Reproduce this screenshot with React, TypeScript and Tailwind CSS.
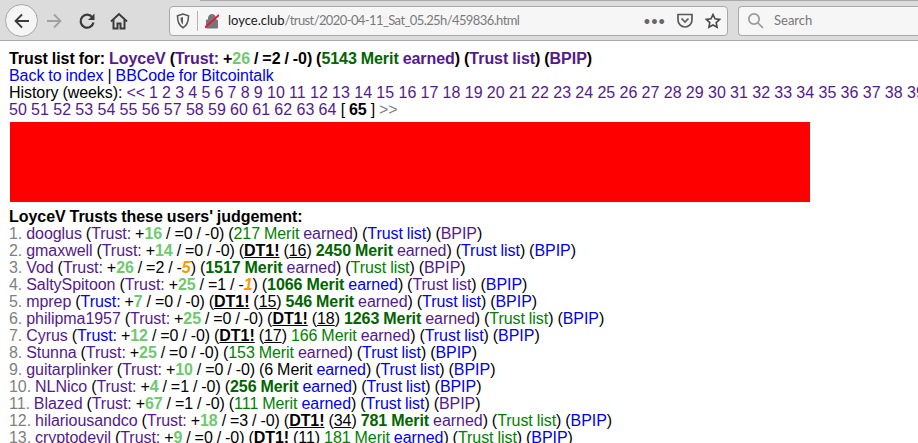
const PURPLE = "text-[#551a8b]";
const BLUE = "text-[#0000ee]";
const GREEN = "text-[#008000]";

type Row = {
  name: string;
  trustColor: string;
  plus: number;
  neutral: number;
  minus: number;
  dt1?: number;
  merit: number;
  bold: boolean;
  meritColor?: string;
  earned: string;
  list: string;
  bpip: string;
};

const rows: Row[] = [
  { name: "dooglus", trustColor: PURPLE, plus: 16, neutral: 0, minus: 0, merit: 217, bold: false, earned: PURPLE, list: BLUE, bpip: PURPLE },
  { name: "gmaxwell", trustColor: PURPLE, plus: 14, neutral: 0, minus: 0, dt1: 16, merit: 2450, bold: true, earned: PURPLE, list: BLUE, bpip: BLUE },
  { name: "Vod", trustColor: PURPLE, plus: 26, neutral: 2, minus: 5, merit: 1517, bold: true, earned: PURPLE, list: GREEN, bpip: PURPLE },
  { name: "SaltySpitoon", trustColor: PURPLE, plus: 25, neutral: 1, minus: 1, merit: 1066, bold: true, earned: BLUE, list: PURPLE, bpip: BLUE },
  { name: "mprep", trustColor: BLUE, plus: 7, neutral: 0, minus: 0, dt1: 15, merit: 546, bold: true, earned: PURPLE, list: BLUE, bpip: BLUE },
  { name: "philipma1957", trustColor: PURPLE, plus: 25, neutral: 0, minus: 0, dt1: 18, merit: 1263, bold: true, earned: PURPLE, list: GREEN, bpip: BLUE },
  { name: "Cyrus", trustColor: BLUE, plus: 12, neutral: 0, minus: 0, dt1: 17, merit: 166, bold: false, earned: PURPLE, list: BLUE, bpip: BLUE },
  { name: "Stunna", trustColor: PURPLE, plus: 25, neutral: 0, minus: 0, merit: 153, bold: false, earned: PURPLE, list: BLUE, bpip: BLUE },
  { name: "guitarplinker", trustColor: PURPLE, plus: 10, neutral: 0, minus: 0, merit: 6, bold: false, meritColor: "text-black", earned: BLUE, list: BLUE, bpip: BLUE },
  { name: "NLNico", trustColor: PURPLE, plus: 4, neutral: 1, minus: 0, merit: 256, bold: true, earned: BLUE, list: BLUE, bpip: BLUE },
  { name: "Blazed", trustColor: PURPLE, plus: 67, neutral: 1, minus: 0, merit: 111, bold: false, earned: BLUE, list: BLUE, bpip: PURPLE },
  { name: "hilariousandco", trustColor: PURPLE, plus: 18, neutral: 3, minus: 0, dt1: 34, merit: 781, bold: true, earned: PURPLE, list: GREEN, bpip: BLUE },
  { name: "cryptodevil", trustColor: PURPLE, plus: 9, neutral: 0, minus: 0, dt1: 11, merit: 181, bold: false, earned: BLUE, list: GREEN, bpip: BLUE },
];

const weeks = Array.from({ length: 49 }, (_, i) => i + 1);
const weeks2 = Array.from({ length: 15 }, (_, i) => i + 50);

function Toolbar() {
  return (
    <div className="h-[41px] shrink-0 bg-[#dcdcdc] border-b border-[#a8a8a8] flex flex-col text-[#3d3d3d] font-['Lato',sans-serif]">
      <div className="h-px ml-[200px] bg-[#a8a8a8]" />
      <div className="flex-1 flex items-center pl-[5px]">
        <div className="w-[33px] h-[33px] rounded-full bg-[#f5f5f5] border border-[#a5a5a5] flex items-center justify-center">
          <svg width="18" height="18" viewBox="0 0 18 18" fill="none" stroke="#3a3a3a" strokeWidth="1.8"><path d="M16 9H2.500M9 2.500 2.500 9 9 15.500" /></svg>
        </div>
        <svg className="ml-[7px]" width="18" height="18" viewBox="0 0 18 18" fill="none" stroke="#a0a0a0" strokeWidth="1.8"><path d="M2 9h13.500M9 2.500 15.500 9 9 15.500" /></svg>
        <svg className="ml-[15px]" width="18" height="18" viewBox="0 0 18 18" fill="none" stroke="#3a3a3a" strokeWidth="2.200"><path d="M14.500 5.500A6.500 6.500 0 1 0 15.500 10.500" /><path d="M16.500 1.500v6.500h-6.500z" fill="#3a3a3a" stroke="none" /></svg>
        <svg className="ml-[14px]" width="18" height="18" viewBox="0 0 18 18" fill="none" stroke="#3a3a3a" strokeWidth="2"><path d="M1 9.500 9 2l8 7.500" /><path d="M3.500 8v8.500h4v-5h3v5h4V8" /></svg>

        <div className="ml-[41px] w-[559px] h-[30px] shrink-0 bg-[#f6f6f6] border border-[#a9a9a9] rounded-[4px] flex items-center">
          <svg className="ml-[6px]" width="14" height="16" viewBox="0 0 14 16" fill="none" stroke="#5a5a5a" strokeWidth="1.6"><path d="M7 1 1.500 2.800c0 5 .8 9.500 5.500 12 4.700-2.500 5.500-7 5.500-12z" /><path d="M7 4 4.500 4.800C4.500 7.500 5 10 7 11.500z" fill="#5a5a5a" stroke="none" /></svg>
          <div className="ml-[7px] w-px h-[20px] bg-[#b4b4b4]" />
          <svg className="ml-[7px]" width="14" height="16" viewBox="0 0 14 16"><path d="M3.500 7V5a3.500 3.500 0 0 1 7 0v2M1.500 7h11v8h-11z" fill="#777" stroke="#777" /><path d="M0 14.500 14 2" stroke="#e6183c" strokeWidth="2" /></svg>
          <div className="ml-[9px] text-[13px] leading-none whitespace-nowrap">
            <span className="text-[#1a1a1a]">loyce.club</span><span className="text-[#7a7a7a] tracking-[-0.6px]">/trust/2020-04-11_Sat_05.25h/459836.html</span>
          </div>
          <span className="ml-auto text-[#666] text-[11px] font-bold tracking-[1px]">•••</span>
          <svg className="ml-[11px]" width="16" height="15" viewBox="0 0 16 15" fill="none" stroke="#5a5a5a" strokeWidth="1.7"><path d="M1 1.500h14v5.500a7 7 0 0 1-14 0z" /><path d="m4.500 5.500 3.500 3.500 3.500-3.500" /></svg>
          <svg className="ml-[12px] mr-[6px]" width="16" height="16" viewBox="0 0 16 16" fill="none" stroke="#4a4a4a" strokeWidth="1.6"><path d="m8 1.500 2 4.300 4.700.6-3.500 3.200.9 4.700L8 12l-4.100 2.300.9-4.700L1.300 6.400 6 5.800z" /></svg>
        </div>

        <div className="ml-[10px] flex-1 h-[30px] bg-[#f6f6f6] border border-r-0 border-[#a9a9a9] rounded-l-[4px] flex items-center">
          <svg className="ml-[8px]" width="17" height="17" viewBox="0 0 17 17" fill="none" stroke="#9a9a9a" strokeWidth="1.7"><circle cx="7" cy="7" r="5.200" /><path d="m11 11 5 5" /></svg>
          <span className="ml-[10px] text-[13px] text-[#777] -mt-px">Search</span>
        </div>
      </div>
    </div>
  );
}

function UserRow({ row, index }: { row: Row; index: number }) {
  const meritColor = row.meritColor ?? (row.bold ? "text-[#006400]" : GREEN);
  return (
    <div className="h-[17px]">
      <span className="text-[#808080]">{index}. </span>
      <span className={PURPLE}>{row.name}</span> (<span className={row.trustColor}>Trust:</span> +
      <b className="text-[#6fc96f]">{row.plus}</b> / =<span>{row.neutral}</span> / -
      {row.minus > 0 ? <b className="italic text-[#ff9900]">{row.minus}</b> : row.minus})
      {" "}
      {row.dt1 !== undefined && (
        <>
          (<b className="underline">DT1!</b> (<span className="underline">{row.dt1}</span>){" "}
        </>
      )}
      {row.dt1 === undefined && "("}
      <span className={`${meritColor} ${row.bold ? "font-bold" : ""}`}>{row.merit} Merit</span>{" "}
      <span className={row.earned}>earned</span>) (<span className={row.list}>Trust list</span>) (<span className={row.bpip}>BPIP</span>)
    </div>
  );
}

export default function App() {
  return (
    <div className="w-[918px] h-[443px] overflow-hidden bg-white flex flex-col font-['Liberation_Sans',Arial,sans-serif] text-[16px] leading-[17px] text-black">
      <Toolbar />
      <div className="pl-[9px] pt-[9px] whitespace-nowrap [word-spacing:-0.45px] tracking-[-0.05px]">
        <div className="font-bold">
          Trust list for: <span className={PURPLE}>LoyceV</span> (<span className={PURPLE}>Trust:</span> +<span className="text-[#6fc96f]">26</span> / =2 / -0) (<span className="text-[#006400]">5143 Merit</span> <span className={PURPLE}>earned</span>) (<span className={PURPLE}>Trust list</span>) (<span className={PURPLE}>BPIP</span>)
        </div>
        <div>
          <span className={BLUE}>Back to index</span> | <span className={BLUE}>BBCode for Bitcointalk</span>
        </div>
        <div>
          History (weeks): <span className={PURPLE}>&lt;&lt;</span>{" "}
          {weeks.map((w) => (
            <span key={w} className={`${PURPLE} tracking-[0.1px]`}>{w} </span>
          ))}
        </div>
        <div>
          {weeks2.map((w) => (
            <span key={w} className={`${PURPLE} tracking-[0.1px]`}>{w} </span>
          ))}
          [ <b>65</b> ] <span className="text-[#808080]">&gt;&gt;</span>
        </div>
        <div className="w-[800px] h-[80px] bg-[#ff0000] ml-px mt-[4px] mb-[6px]" />
        <div className="font-bold">LoyceV Trusts these users' judgement:</div>
        {rows.map((row, i) => (
          <UserRow key={row.name} row={row} index={i + 1} />
        ))}
      </div>
    </div>
  );
}
